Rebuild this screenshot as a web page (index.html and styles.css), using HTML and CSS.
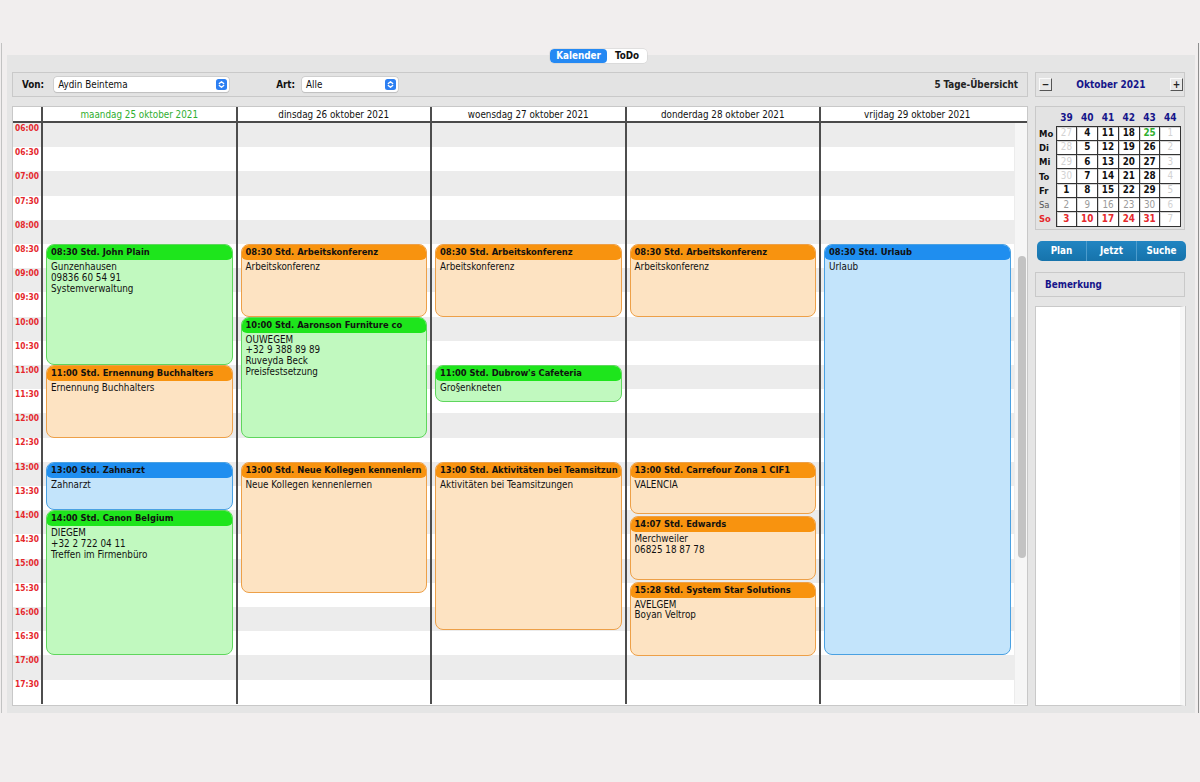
FILE: index.html
```html
<!DOCTYPE html>
<html lang="de">
<head>
<meta charset="utf-8">
<title>Kalender</title>
<link rel="stylesheet" href="styles.css">
</head>
<body>
<div class="frame">
  <div class="tabs">
    <span class="tab active">Kalender</span><span class="tab todo">ToDo</span>
  </div>
  <div class="panel">
    <div class="leftcol">
      <div class="toolbar">
        <span class="lbl">Von:</span>
        <div class="select sel-von"><span>Aydin Beintema</span>
          <svg class="chev" width="11" height="11" viewBox="0 0 11 11"><rect width="11" height="11" rx="2.5" fill="#2c7ff2"/><path d="M3.3 4.6 L5.5 2.7 L7.7 4.6 M3.3 6.4 L5.5 8.3 L7.7 6.4" stroke="#fff" stroke-width="1.3" fill="none" stroke-linecap="round" stroke-linejoin="round"/></svg>
        </div>
        <span class="lbl lbl-art">Art:</span>
        <div class="select sel-art"><span>Alle</span>
          <svg class="chev" width="11" height="11" viewBox="0 0 11 11"><rect width="11" height="11" rx="2.5" fill="#2c7ff2"/><path d="M3.3 4.6 L5.5 2.7 L7.7 4.6 M3.3 6.4 L5.5 8.3 L7.7 6.4" stroke="#fff" stroke-width="1.3" fill="none" stroke-linecap="round" stroke-linejoin="round"/></svg>
        </div>
        <span class="spacer"></span>
        <span class="overview">5 Tage-Übersicht</span>
      </div>

      <div class="cal">
        <div class="cal-head">
          <div class="hc-time"></div>
          <div class="hc today">maandag 25 oktober 2021</div>
          <div class="hc">dinsdag 26 oktober 2021</div>
          <div class="hc">woensdag 27 oktober 2021</div>
          <div class="hc">donderdag 28 oktober 2021</div>
          <div class="hc">vrijdag 29 oktober 2021</div>
          <div class="hc-scroll"></div>
        </div>
        <div class="cal-body">
          <div class="times">
            <div class="tl">06:00</div><div class="tl">06:30</div>
            <div class="tl">07:00</div><div class="tl">07:30</div>
            <div class="tl">08:00</div><div class="tl">08:30</div>
            <div class="tl">09:00</div><div class="tl">09:30</div>
            <div class="tl">10:00</div><div class="tl">10:30</div>
            <div class="tl">11:00</div><div class="tl">11:30</div>
            <div class="tl">12:00</div><div class="tl">12:30</div>
            <div class="tl">13:00</div><div class="tl">13:30</div>
            <div class="tl">14:00</div><div class="tl">14:30</div>
            <div class="tl">15:00</div><div class="tl">15:30</div>
            <div class="tl">16:00</div><div class="tl">16:30</div>
            <div class="tl">17:00</div><div class="tl">17:30</div>
          </div>

          <div class="day">
            <div class="ev green" style="top:121px;height:121px"><div class="ev-h">08:30 Std. John Plain</div><div class="ev-b">Gunzenhausen<br>09836 60 54 91<br>Systemverwaltung</div></div>
            <div class="ev orange" style="top:242px;height:72.6px"><div class="ev-h">11:00 Std. Ernennung Buchhalters</div><div class="ev-b">Ernennung Buchhalters</div></div>
            <div class="ev blue" style="top:338.8px;height:48.4px"><div class="ev-h">13:00 Std. Zahnarzt</div><div class="ev-b">Zahnarzt</div></div>
            <div class="ev green" style="top:387.2px;height:145.2px"><div class="ev-h">14:00 Std. Canon Belgium</div><div class="ev-b">DIEGEM<br>+32 2 722 04 11<br>Treffen im Firmenbüro</div></div>
          </div>

          <div class="day">
            <div class="ev orange" style="top:121px;height:72.6px"><div class="ev-h">08:30 Std. Arbeitskonferenz</div><div class="ev-b">Arbeitskonferenz</div></div>
            <div class="ev green" style="top:193.6px;height:121px"><div class="ev-h">10:00 Std. Aaronson Furniture co</div><div class="ev-b">OUWEGEM<br>+32 9 388 89 89<br>Ruveyda Beck<br>Preisfestsetzung</div></div>
            <div class="ev orange" style="top:338.8px;height:131px"><div class="ev-h">13:00 Std. Neue Kollegen kennenlern</div><div class="ev-b">Neue Kollegen kennenlernen</div></div>
          </div>

          <div class="day">
            <div class="ev orange" style="top:121px;height:72.6px"><div class="ev-h">08:30 Std. Arbeitskonferenz</div><div class="ev-b">Arbeitskonferenz</div></div>
            <div class="ev green" style="top:242px;height:37px"><div class="ev-h">11:00 Std. Dubrow's Cafeteria</div><div class="ev-b">Gro§enkneten</div></div>
            <div class="ev orange" style="top:338.8px;height:168px"><div class="ev-h">13:00 Std. Aktivitäten bei Teamsitzun</div><div class="ev-b">Aktivitäten bei Teamsitzungen</div></div>
          </div>

          <div class="day">
            <div class="ev orange" style="top:121px;height:72.6px"><div class="ev-h">08:30 Std. Arbeitskonferenz</div><div class="ev-b">Arbeitskonferenz</div></div>
            <div class="ev orange" style="top:338.8px;height:52.5px"><div class="ev-h">13:00 Std. Carrefour Zona 1 CIF1</div><div class="ev-b">VALENCIA</div></div>
            <div class="ev orange" style="top:393px;height:64px"><div class="ev-h">14:07 Std. Edwards</div><div class="ev-b">Merchweiler<br>06825 18 87 78</div></div>
            <div class="ev orange" style="top:458.5px;height:74px"><div class="ev-h">15:28 Std. System Star Solutions</div><div class="ev-b">AVELGEM<br>Boyan Veltrop</div></div>
          </div>

          <div class="day">
            <div class="ev blue" style="top:121px;height:411.4px"><div class="ev-h">08:30 Std. Urlaub</div><div class="ev-b">Urlaub</div></div>
          </div>

          <div class="scroll"><div class="thumb"></div></div>
        </div>
      </div>
    </div>

    <div class="rightcol">
      <div class="nav">
        <span class="navbtn">−</span>
        <span class="month">Oktober 2021</span>
        <span class="navbtn">+</span>
      </div>

      <div class="minical">
        <table class="mc">
          <thead>
            <tr><th></th><th>39</th><th>40</th><th>41</th><th>42</th><th>43</th><th>44</th></tr>
          </thead>
          <tbody>
            <tr><th>Mo</th><td class="o">27</td><td>4</td><td>11</td><td>18</td><td class="t">25</td><td class="o">1</td></tr>
            <tr><th>Di</th><td class="o">28</td><td>5</td><td>12</td><td>19</td><td>26</td><td class="o">2</td></tr>
            <tr><th>Mi</th><td class="o">29</td><td>6</td><td>13</td><td>20</td><td>27</td><td class="o">3</td></tr>
            <tr><th>To</th><td class="o">30</td><td>7</td><td>14</td><td>21</td><td>28</td><td class="o">4</td></tr>
            <tr><th>Fr</th><td>1</td><td>8</td><td>15</td><td>22</td><td>29</td><td class="o">5</td></tr>
            <tr><th class="sa">Sa</th><td class="s">2</td><td class="s">9</td><td class="s">16</td><td class="s">23</td><td class="s">30</td><td class="o">6</td></tr>
            <tr><th class="so">So</th><td class="r">3</td><td class="r">10</td><td class="r">17</td><td class="r">24</td><td class="r">31</td><td class="o">7</td></tr>
          </tbody>
        </table>
      </div>

      <div class="btns">
        <span class="btn">Plan</span><span class="btn">Jetzt</span><span class="btn">Suche</span>
      </div>

      <div class="bemerk">Bemerkung</div>
      <div class="notes"></div>
    </div>
  </div>
</div>
</body>
</html>
```
FILE: styles.css
```css
* { box-sizing: border-box; }
html, body { margin: 0; padding: 0; }
body {
  width: 1200px;
  height: 782px;
  overflow: hidden;
  background: #f1eeee;
  font-family: "DejaVu Sans Condensed", "DejaVu Sans", sans-serif;
  font-stretch: condensed;
  font-size: 9.6px;
  color: #111;
}

.frame {
  position: relative;
  margin: 43px 0 0 1px;
  width: 1198px;
  height: 670px;
  border-left: 1px solid #c2c2c2;
  border-right: 1px solid #8e8e8e;
  padding: 12px 3px 0 5px;
}

/* segmented tabs over the panel edge */
.tabs {
  position: absolute;
  top: 6px;
  left: 548px;
  display: flex;
  height: 14px;
  border-radius: 4px;
  background: #fff;
  box-shadow: 0 0 0 0.5px #d0d0d0;
  z-index: 2;
  overflow: hidden;
}
.tab {
  font-weight: bold;
  font-size: 9.8px;
  line-height: 14px;
  text-align: center;
  color: #111;
}
.tab.active {
  background: #2589f3;
  color: #fff;
  width: 57px;
  border-radius: 4px;
}
.tab.todo { width: 40px; }

.panel {
  height: 658px;
  background: #e5e5e5;
  padding: 17px 9px 7px 5px;
  display: flex;
  gap: 7px;
}

.leftcol {
  width: 1016px;
  display: flex;
  flex-direction: column;
  gap: 9px;
}
.rightcol {
  width: 150px;
  display: flex;
  flex-direction: column;
}

/* toolbar */
.toolbar {
  height: 25px;
  border: 1px solid #c9c9c9;
  background: #e3e3e3;
  display: flex;
  align-items: center;
  padding: 0 9px;
}
.lbl { font-weight: bold; font-size: 9.8px; }
.lbl-art { margin-left: 47px; }
.select {
  height: 15px;
  background: #fff;
  border-radius: 3px;
  box-shadow: 0 0 0 0.5px #bdbdbd, 0 0.5px 1px rgba(0,0,0,0.15);
  display: flex;
  align-items: center;
  justify-content: space-between;
  padding: 0 2px 0 4px;
  margin-left: 10px;
  font-size: 9.8px;
}
.sel-von { width: 175px; }
.sel-art { width: 96px; margin-left: 7px; }
.chev { display: block; }
.spacer { flex: 1; }
.overview { font-weight: bold; font-size: 9.8px; color: #222; }

/* calendar */
.cal {
  flex: 1;
  border: 1px solid #c8c8c8;
  background: #fff;
  display: flex;
  flex-direction: column;
}
.cal-head {
  height: 16px;
  display: grid;
  grid-template-columns: 28px repeat(5, 194.5px) 1fr;
  border-bottom: 2px solid #4a4a4a;
}
.hc {
  border-left: 2px solid #4d4d4d;
  text-align: center;
  line-height: 15px;
  font-size: 9.8px;
  color: #111;
}
.hc.today { color: #2fae2f; }

.cal-body {
  height: 580.8px;
  display: grid;
  grid-template-columns: 28px repeat(5, 194.5px) 1fr;
  background: repeating-linear-gradient(to bottom, #ececec 0, #ececec 24.2px, #ffffff 24.2px, #ffffff 48.4px);
}
.times { display: flex; flex-direction: column; }
.tl {
  height: 24.2px;
  flex: none;
  text-align: center;
  font-weight: bold;
  font-size: 8.4px;
  line-height: 11px;
  color: #e5282c;
}
.day {
  position: relative;
  border-left: 2px solid #4d4d4d;
}
.scroll {
  background: #f6f6f6;
  border-left: 1px solid #ececec;
  padding: 133px 0 0 3px;
}
.thumb {
  width: 8px;
  height: 302px;
  border-radius: 4px;
  background: #c3c3c3;
}

/* events */
.ev {
  position: absolute;
  left: 3px;
  right: 3px;
  border: 1px solid;
  border-radius: 8px;
  overflow: hidden;
}
.ev-h {
  margin: -1px -1px 0 -1px;
  height: 16px;
  line-height: 16px;
  padding-left: 5px;
  border-radius: 8px 8px 6px 6px;
  font-weight: bold;
  font-size: 9.3px;
  white-space: nowrap;
  overflow: hidden;
  color: #111;
}
.ev-b {
  padding: 2px 4px 0 4px;
  line-height: 10.8px;
  font-size: 9.8px;
  color: #111;
}
.green { background: #c1f9bf; border-color: #5fd65d; }
.green .ev-h { background: #1ee51c; }
.orange { background: #fde3c2; border-color: #eda048; }
.orange .ev-h { background: #f8930f; }
.blue { background: #c3e4fb; border-color: #4aa1e2; }
.blue .ev-h { background: #1f8eef; }

/* right column */
.nav {
  height: 25px;
  border: 1px solid #c9c9c9;
  background: #e3e3e3;
  display: flex;
  align-items: center;
  justify-content: space-between;
  padding: 0 1px 0 3px;
}
.navbtn {
  width: 13px;
  height: 13px;
  background: #e8e8e8;
  border-top: 1px solid #fafafa;
  border-left: 1px solid #fafafa;
  border-right: 1px solid #555;
  border-bottom: 1px solid #555;
  font-weight: bold;
  font-size: 10px;
  line-height: 11px;
  text-align: center;
  color: #222;
}
.month {
  font-weight: bold;
  font-size: 10px;
  color: #15158a;
}

.minical {
  margin-top: 9px;
  height: 124px;
  border: 1px solid #c9c9c9;
  background: #e3e3e3;
  padding: 2px 0 0 2px;
}
.mc {
  border-collapse: collapse;
  font-size: 9.8px;
}
.mc thead th {
  height: 17px;
  font-weight: bold;
  color: #15158a;
  font-size: 10px;
  text-align: center;
  padding: 0;
}
.mc tbody th {
  width: 18px;
  height: 14.3px;
  text-align: left;
  padding: 0 0 0 1px;
  font-weight: bold;
  font-size: 9.4px;
  color: #111;
}
.mc tbody th.sa { color: #555; font-weight: normal; }
.mc tbody th.so { color: #e5282c; }
.mc td {
  width: 20.8px;
  height: 14.3px;
  padding: 0;
  border: 1px solid #333;
  background: #fff;
  box-shadow: inset 1px 1px 0 #d6d6d6;
  text-align: center;
  line-height: 12px;
  font-weight: bold;
  color: #111;
}
.mc td.o { color: #d2d2d2; font-weight: normal; }
.mc td.s { color: #9a9a9a; font-weight: normal; }
.mc td.r { color: #e5282c; }
.mc td.t { color: #2fae2f; }

.btns {
  margin: 11px -1px 0 2px;
  height: 20px;
  display: flex;
  border-radius: 5px;
  background: linear-gradient(#2185c2, #1673ab);
  overflow: hidden;
}
.btn {
  flex: 1;
  text-align: center;
  color: #fff;
  font-weight: bold;
  font-size: 9.8px;
  line-height: 20px;
}
.btn + .btn { border-left: 1px solid #4d9ccd; }

.bemerk {
  margin-top: 11px;
  height: 25px;
  border: 1px solid #c9c9c9;
  background: #e4e4e4;
  padding-left: 9px;
  line-height: 23px;
  font-weight: bold;
  font-size: 9.8px;
  color: #15158a;
}
.notes {
  margin-top: 9px;
  flex: 1;
  background: #fff;
  border: 1px solid #c9c9c9;
  border-right: 5px solid #f7f7f7;
  box-shadow: 1px 0 0 #c9c9c9;
}
```
